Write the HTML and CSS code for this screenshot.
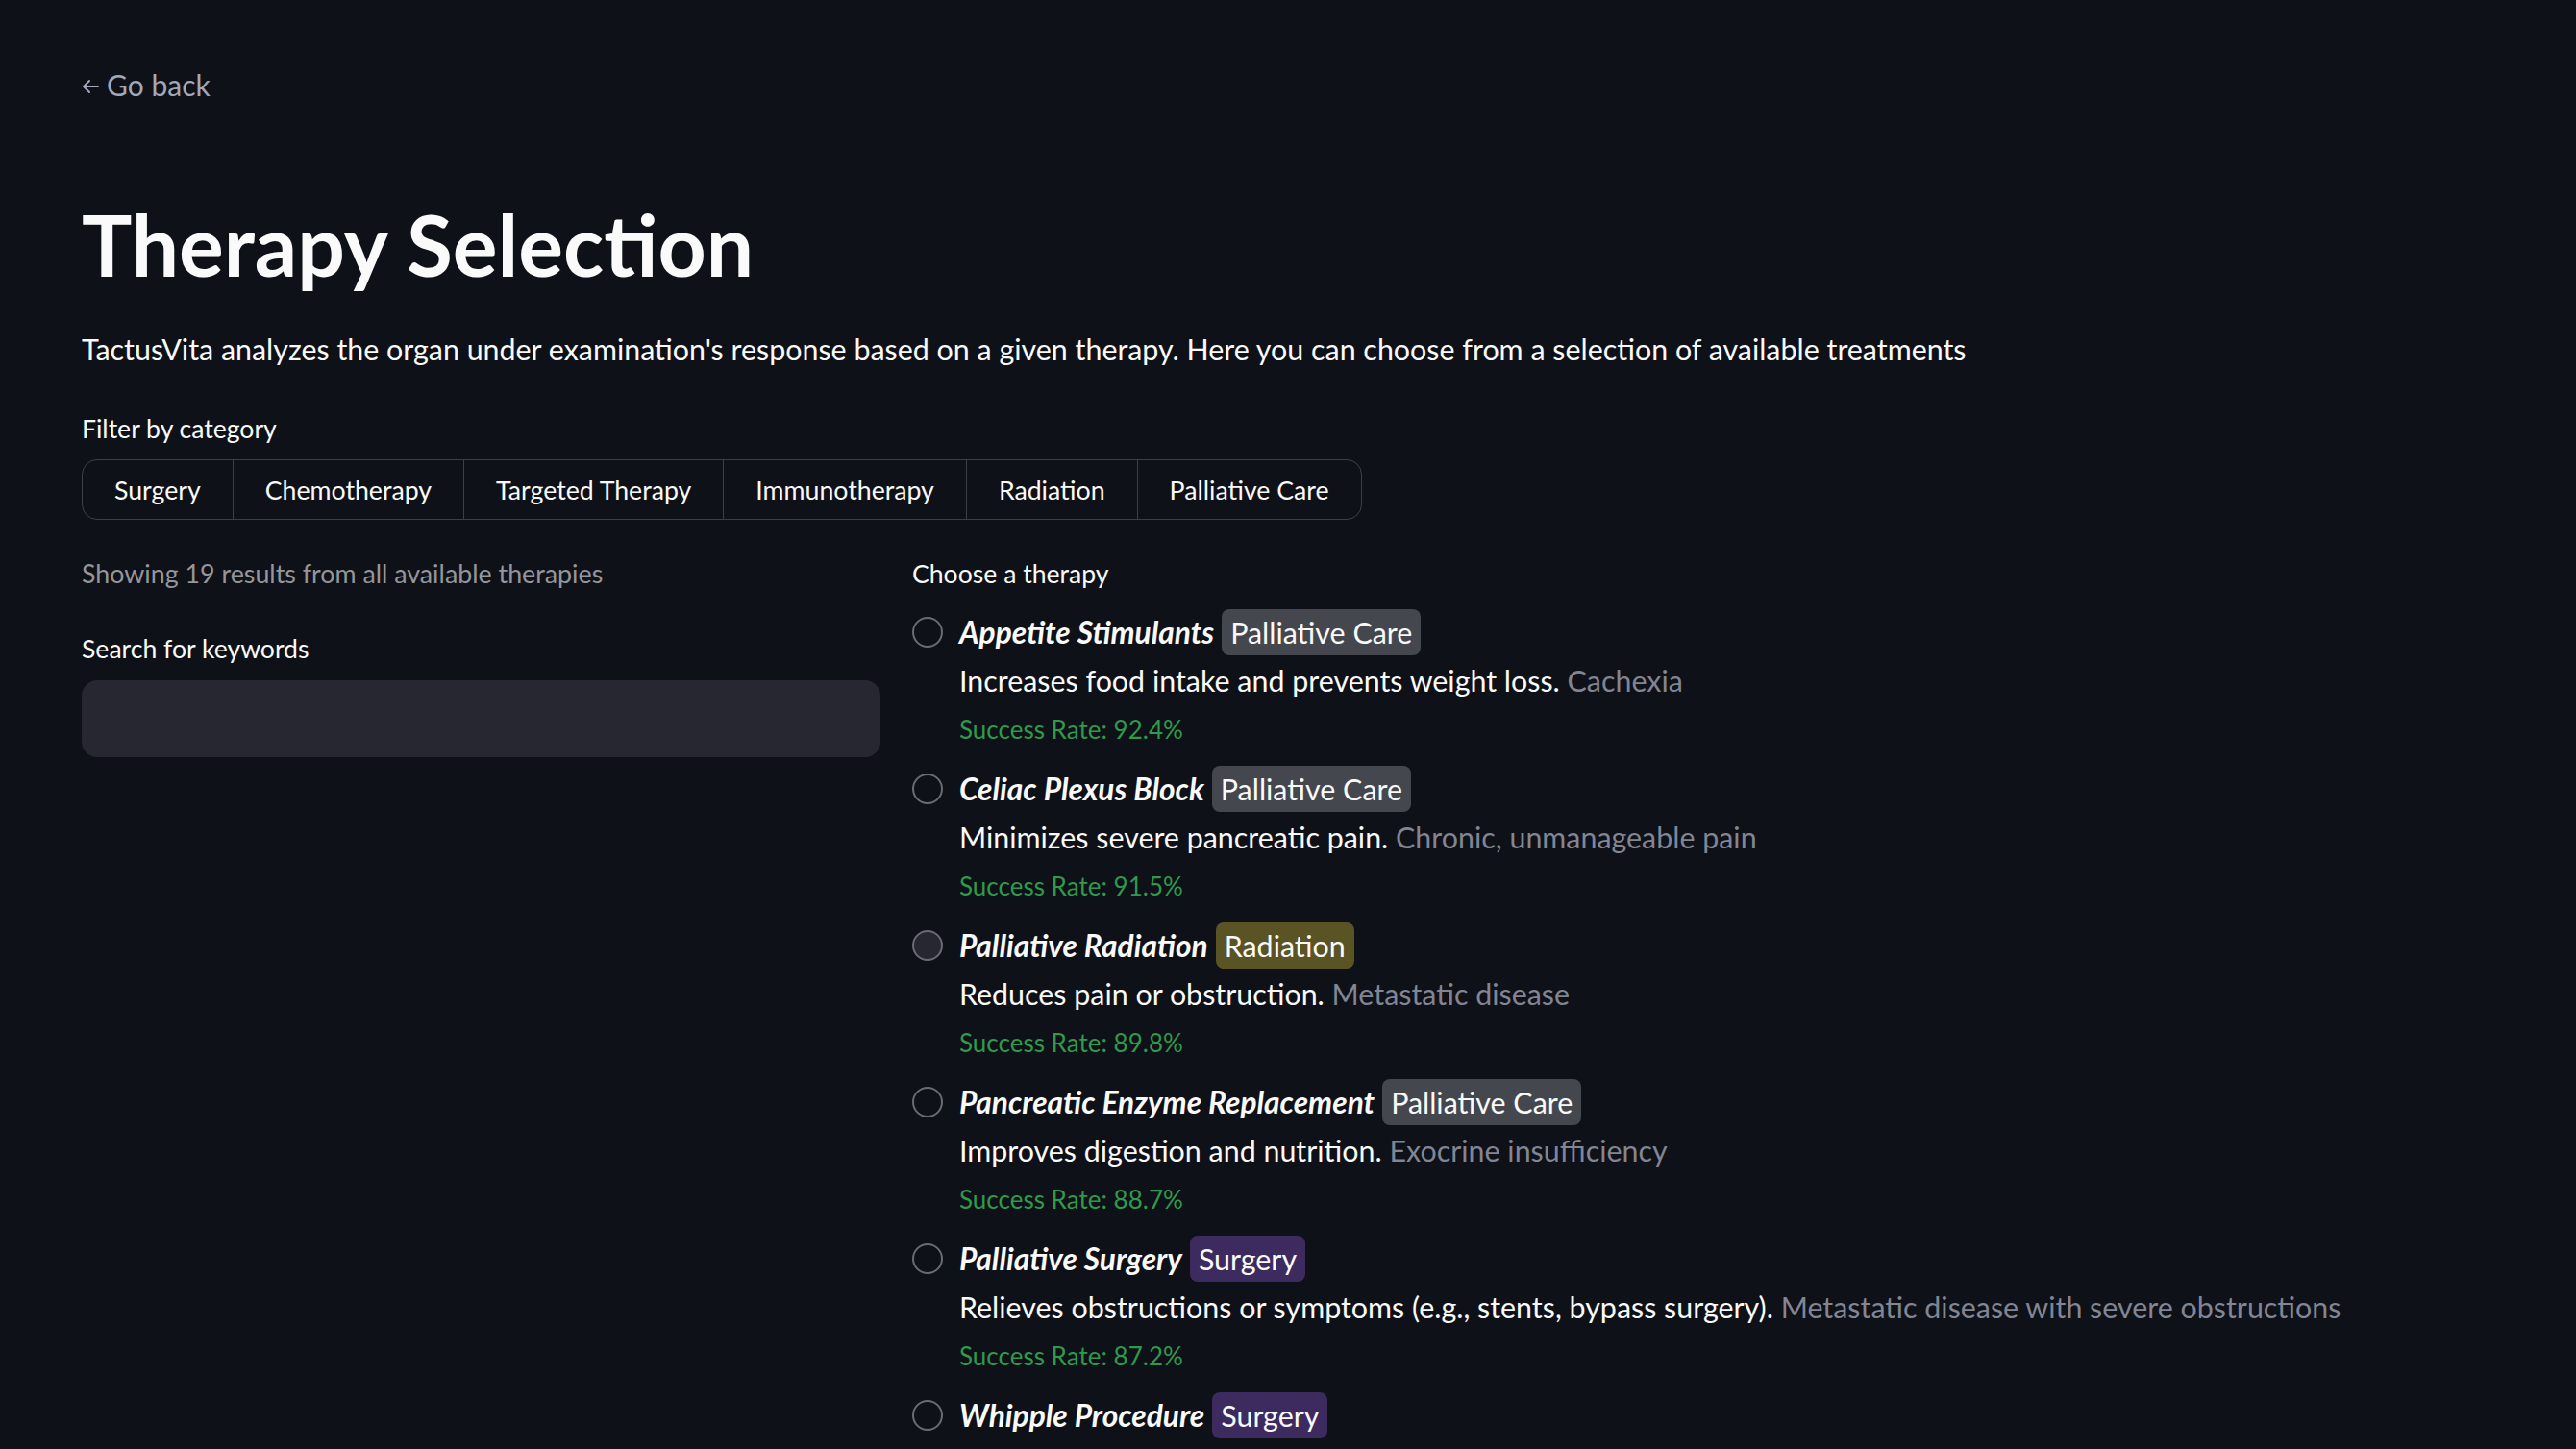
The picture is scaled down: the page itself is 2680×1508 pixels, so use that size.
FILE: index.html
```html
<!DOCTYPE html>
<html lang="en">
<head>
<meta charset="utf-8">
<title>Therapy Selection</title>
<link rel="stylesheet" href="styles.css">
</head>
<body>
<main class="page">
  <a class="back" href="#">
    <svg class="back-icon" viewBox="0 0 18 18" width="18" height="18" aria-hidden="true">
      <path d="M17 9H2M8 3L2 9l6 6" fill="none" stroke="currentColor" stroke-width="2" stroke-linecap="round" stroke-linejoin="round"/>
    </svg>
    <span>Go back</span>
  </a>

  <h1 class="title">Therapy Selection</h1>
  <p class="lead">TactusVita analyzes the organ under examination's response based on a given therapy. Here you can choose from a selection of available treatments</p>

  <div class="label filter-label">Filter by category</div>
  <div class="segmented">
    <button class="seg">Surgery</button>
    <button class="seg">Chemotherapy</button>
    <button class="seg">Targeted Therapy</button>
    <button class="seg">Immunotherapy</button>
    <button class="seg">Radiation</button>
    <button class="seg">Palliative Care</button>
  </div>

  <div class="columns">
    <section class="left">
      <div class="label muted">Showing 19 results from all available therapies</div>
      <div class="label search-label">Search for keywords</div>
      <div class="input"></div>
    </section>

    <section class="right">
      <div class="label">Choose a therapy</div>
      <div class="options">
        <div class="option">
          <span class="radio"></span>
          <div class="head"><span class="name">Appetite Stimulants</span><span class="badge gray">Palliative Care</span></div>
          <div class="desc">Increases food intake and prevents weight loss. <span class="cond">Cachexia</span></div>
          <div class="rate">Success Rate: 92.4%</div>
        </div>
        <div class="option">
          <span class="radio"></span>
          <div class="head"><span class="name">Celiac Plexus Block</span><span class="badge gray">Palliative Care</span></div>
          <div class="desc">Minimizes severe pancreatic pain. <span class="cond">Chronic, unmanageable pain</span></div>
          <div class="rate">Success Rate: 91.5%</div>
        </div>
        <div class="option">
          <span class="radio hover"></span>
          <div class="head"><span class="name">Palliative Radiation</span><span class="badge yellow">Radiation</span></div>
          <div class="desc">Reduces pain or obstruction. <span class="cond">Metastatic disease</span></div>
          <div class="rate">Success Rate: 89.8%</div>
        </div>
        <div class="option">
          <span class="radio"></span>
          <div class="head"><span class="name">Pancreatic Enzyme Replacement</span><span class="badge gray">Palliative Care</span></div>
          <div class="desc">Improves digestion and nutrition. <span class="cond">Exocrine insufficiency</span></div>
          <div class="rate">Success Rate: 88.7%</div>
        </div>
        <div class="option">
          <span class="radio"></span>
          <div class="head"><span class="name">Palliative Surgery</span><span class="badge violet">Surgery</span></div>
          <div class="desc">Relieves obstructions or symptoms (e.g., stents, bypass surgery). <span class="cond">Metastatic disease with severe obstructions</span></div>
          <div class="rate">Success Rate: 87.2%</div>
        </div>
        <div class="option">
          <span class="radio"></span>
          <div class="head"><span class="name">Whipple Procedure</span><span class="badge violet">Surgery</span></div>
          <div class="desc">Removes the head of the pancreas and surrounding tissue. <span class="cond">Resectable tumor in the pancreatic head</span></div>
          <div class="rate">Success Rate: 86.1%</div>
        </div>
      </div>
    </section>
  </div>
</main>
</body>
</html>
```

FILE: styles.css
```css
* { box-sizing: border-box; }

html, body {
  margin: 0;
  background: #0e1117;
  color: #fafafa;
  font-family: Lato, "Noto Sans", sans-serif;
}

.page {
  padding: 68px 85px 120px 85px;
}

.back {
  display: inline-flex;
  align-items: center;
  gap: 8px;
  height: 40px;
  font-size: 30px;
  line-height: 40px;
  color: #a3a8b8;
  text-decoration: none;
}

.back-icon {
  display: block;
  margin-top: 3px;
}

.title {
  margin: 97px 0 0;
  font-size: 87.5px;
  line-height: 100px;
  font-weight: 700;
}

.lead {
  margin: 38px 0 0;
  font-size: 30.4px;
  line-height: 40px;
}

.label {
  font-size: 26.6px;
  line-height: 36px;
}

.filter-label {
  margin-top: 45px;
}

.segmented {
  margin-top: 14px;
  display: inline-flex;
  height: 63px;
  border: 1px solid rgba(250, 250, 250, 0.2);
  border-radius: 16px;
  overflow: hidden;
}

.seg {
  display: flex;
  align-items: center;
  padding: 0 33px;
  margin: 0;
  border: none;
  border-left: 1px solid rgba(250, 250, 250, 0.2);
  background: transparent;
  color: #fafafa;
  font-family: inherit;
  font-size: 26.7px;
  line-height: 36px;
}

.seg:first-child {
  border-left: none;
}

.columns {
  display: grid;
  grid-template-columns: 831px 1fr;
  column-gap: 33px;
  margin-top: 38px;
}

.muted {
  color: #95969b;
  font-size: 26.8px;
}

.search-label {
  margin-top: 42px;
}

.input {
  margin-top: 15px;
  height: 80px;
  background: #262730;
  border-radius: 16px;
}

.options {
  margin-top: 19px;
  display: flex;
  flex-direction: column;
  gap: 20px;
}

.option {
  display: grid;
  grid-template-columns: 32px 1fr;
  column-gap: 17px;
}

.radio {
  grid-row: 1;
  align-self: center;
  width: 32px;
  height: 32px;
  border-radius: 50%;
  border: 2px solid #6a6c73;
}

.radio.hover {
  background: #262730;
}

.head {
  grid-column: 2;
  display: flex;
  align-items: center;
  height: 48px;
  font-size: 30.4px;
  line-height: 40px;
}

.name {
  font-weight: 700;
  font-style: italic;
  font-size: 31.7px;
}

.badge {
  margin-left: 8px;
  padding: 0 9px;
  height: 48px;
  line-height: 48px;
  border-radius: 8px;
}

.badge.gray { background: #45474f; }
.badge.yellow { background: #5a5324; }
.badge.violet { background: #3d2a5f; }

.desc {
  grid-column: 2;
  margin-top: 6px;
  font-size: 30.4px;
  line-height: 40px;
}

.cond {
  color: #828594;
}

.rate {
  grid-column: 2;
  margin-top: 13px;
  font-size: 26px;
  line-height: 36px;
  color: #31994c;
}
```
